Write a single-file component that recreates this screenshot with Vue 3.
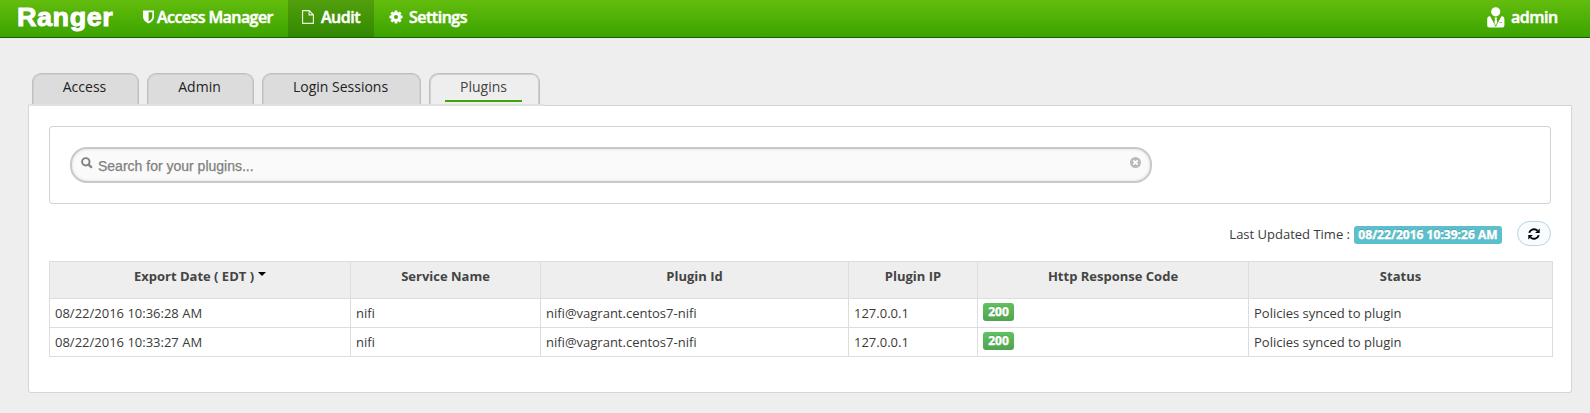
<script setup>
const tabs = [
  { label: 'Access', cls: 'w107' },
  { label: 'Admin', cls: 'w107' },
  { label: 'Login Sessions', cls: 'w160' },
  { label: 'Plugins', cls: 'active' },
]
const columns = ['Export Date ( EDT )', 'Service Name', 'Plugin Id', 'Plugin IP', 'Http Response Code', 'Status']
const rows = [
  { date: '08/22/2016 10:36:28 AM', service: 'nifi', id: 'nifi@vagrant.centos7-nifi', ip: '127.0.0.1', code: '200', status: 'Policies synced to plugin' },
  { date: '08/22/2016 10:33:27 AM', service: 'nifi', id: 'nifi@vagrant.centos7-nifi', ip: '127.0.0.1', code: '200', status: 'Policies synced to plugin' },
]
</script>

<template>
  <div class="page">
    <header class="topbar">
      <div class="logo">Ranger</div>
      <nav class="nav">
        <a class="nav-item access">
          <svg width="11" height="14" viewBox="0 0 11 14"><path d="M0 0.500h11v6.200c0 3.200-2.400 5.200-5.500 6.800C2.400 11.900 0 9.900 0 6.700z" fill="#fff" /><path d="M5.600 2.200h3.700v4.400c0 2.200-1.500 3.600-3.700 4.900z" fill="#46a800" /></svg>
          <span>Access Manager</span>
        </a>
        <a class="nav-item audit">
          <svg width="12" height="14" viewBox="0 0 12 14"><path d="M0.600 0.600h6.600l4.200 4.200v8.600H0.600zM7.100 0.600v4.300h4.300" fill="none" stroke="#fff" stroke-opacity="0.9" stroke-width="1.100" /></svg>
          <span>Audit</span>
        </a>
        <a class="nav-item settings">
          <svg width="14" height="14" viewBox="-7 -7 14 14">
            <g fill="#fff">
              <rect v-for="n in 4" :key="n" x="-1.400" y="-6.500" width="2.800" height="13" rx="0.400" :transform="`rotate(${n * 45})`" />
              <circle r="4.900" />
            </g>
            <circle r="2" fill="#48aa00" />
          </svg>
          <span>Settings</span>
        </a>
      </nav>
      <div class="user">
        <svg width="18" height="21" viewBox="0 0 18 21">
          <circle cx="8.700" cy="4.800" r="4.600" fill="#fff" />
          <path d="M3 9.100Q0.200 9.600 0.200 12.500v6q0 2 2 2h13.200q2 0 2-2v-6q0-2.900-2.800-3.400L8.800 19.500z" fill="#fff" />
          <path d="M7.400 10.600h2.800l-0.600 2 1.100 3.600-1.900 3.200-1.900-3.200 1.100-3.600z" fill="#fff" />
          <path d="M4.800 10l4 9.500 4-9.500M12.500 15.500h2.500" fill="none" stroke="#4bad04" stroke-width="0.700" />
        </svg>
        <span>admin</span>
      </div>
    </header>

    <main class="content">
      <div class="tabs">
        <div v-for="t in tabs" :key="t.label" class="tab" :class="t.cls"><span>{{ t.label }}</span></div>
      </div>
      <section class="panel">
        <div class="filter">
          <div class="search">
            <svg class="glass" width="12" height="12" viewBox="0 0 12 12"><circle cx="4.800" cy="4.800" r="3.700" fill="none" stroke="#808080" stroke-width="1.900" /><path d="M7.600 7.600l3.300 3.200" stroke="#808080" stroke-width="2.200" /></svg>
            <span class="placeholder">Search for your plugins...</span>
            <svg class="clear" width="11" height="11" viewBox="0 0 11 11"><circle cx="5.500" cy="5.500" r="5.500" fill="#b9b9b9" /><path d="M3.300 3.300l4.400 4.400M7.700 3.300l-4.400 4.400" stroke="#fff" stroke-width="1.700" /></svg>
          </div>
        </div>
        <div class="updated">
          <span class="updated-label">Last Updated Time :</span>
          <span class="stamp">08/22/2016 10:39:26 AM</span>
          <button class="refresh" aria-label="Refresh">
            <svg width="12" height="12" viewBox="0 0 12 12">
              <path d="M1.200 4.700A5 5 0 0 1 9.500 2.700M10.800 7.300A5 5 0 0 1 2.500 9.300" fill="none" stroke="#000" stroke-width="1.900" />
              <path d="M11.700 0.500v4.600H7.100zM0.300 11.500V6.900h4.600z" fill="#000" />
            </svg>
          </button>
        </div>
        <table class="grid">
          <colgroup><col class="c1" /><col class="c2" /><col class="c3" /><col class="c4" /><col class="c5" /><col class="c6" /></colgroup>
          <thead>
            <tr>
              <th v-for="(c, i) in columns" :key="c">{{ c }}<i v-if="i === 0" class="caret"></i></th>
            </tr>
          </thead>
          <tbody>
            <tr v-for="r in rows" :key="r.date">
              <td>{{ r.date }}</td>
              <td>{{ r.service }}</td>
              <td>{{ r.id }}</td>
              <td>{{ r.ip }}</td>
              <td><span class="code">{{ r.code }}</span></td>
              <td>{{ r.status }}</td>
            </tr>
          </tbody>
        </table>
      </section>
    </main>
  </div>
</template>

<style>
body { margin: 0; background: #eee; }
</style>

<style scoped>
* { box-sizing: border-box; }
.page { height: 413px; overflow: hidden; background: #eee; font-family: "Open Sans", "Noto Sans", sans-serif; font-size: 13px; color: #3a3a3a; }
.topbar { display: flex; height: 38px; background: linear-gradient(#63bd0d, #3ba300); border-bottom: 1px solid #176000; color: #fff; }
.logo { width: 112px; margin: 0 0 0 17px; font: bold 25px/35px "Liberation Sans", Arial, sans-serif; letter-spacing: 0.5px; -webkit-text-stroke: 0.9px #fff; text-shadow: 0 0 2px rgba(80, 100, 60, 0.7); transform: scaleX(1.08); transform-origin: 0 0; }
.nav { display: flex; height: 37px; }
.nav-item { display: flex; align-items: center; font-size: 16px; font-weight: 600; line-height: 34px; padding-bottom: 3px; white-space: nowrap; }
.nav-item span, .user span { -webkit-text-stroke: 0.5px #fff; letter-spacing: -0.5px; }
.access { width: 159px; padding-left: 14px; gap: 3px; }
.access span { letter-spacing: -0.57px; }
.audit { width: 86px; padding-left: 14px; gap: 7px; background: linear-gradient(#529f0d, #318800); }
.settings { padding-left: 15px; gap: 6px; }
.user { display: flex; align-items: center; gap: 6px; width: 103px; margin-left: auto; padding-bottom: 3px; font-size: 16px; font-weight: 600; }
.content { padding: 35px 18px 0 28px; }
.tabs { display: flex; gap: 8px; height: 31px; padding-left: 4px; }
.tab { height: 31px; border: 1px solid #bfbfbf; border-width: 1px 1px 0; box-shadow: inset 1px 1px #d0d0d0, inset -1px 0 #d0d0d0; border-radius: 9px 9px 0 0; background: #dcdcdc; text-align: center; font-size: 14px; line-height: 19px; padding: 3px 2px 0 0; color: #222; }
.w107 { width: 107px; }
.w160 { width: 159px; }
.active { width: 111px; background: #eee; color: #444; }
.active span { display: block; width: 77px; height: 25px; margin: 0 auto; border-bottom: 2px solid #3fa40b; }
.panel { position: relative; width: 1544px; height: 289px; border: 1px solid #d6d6d6; border-top: 0; border-radius: 3px; background: linear-gradient(#d4d4d4, #d4d4d4) 0 1px / 100% 1px no-repeat, #fff; padding: 22px 20px 0; }
.panel::before { content: ""; position: absolute; left: -1px; top: 0; width: 517px; height: 2px; background: #e1e1e1; }
.panel::after { content: ""; position: absolute; left: 516px; right: -1px; top: 0; height: 1px; background: #eee; }
.filter { width: 1502px; height: 78px; border: 1px solid #d3d3d3; border-radius: 3px; padding: 20px; }
.search { display: flex; width: 1082px; height: 36px; border: 2px solid #c9c9c9; border-radius: 17px; background: #fafafa; box-shadow: inset 0 0 3px #d6d6d6; padding: 0 9px; }
.glass { margin-top: 8px; }
.placeholder { margin-left: 5px; font: 14px/34px "Liberation Sans", Arial, sans-serif; color: #808080; -webkit-text-stroke: 0.25px #808080; }
.clear { margin: 8px 0 0 auto; }
.updated { display: flex; align-items: center; justify-content: flex-end; height: 57px; }
.updated-label { line-height: 18px; margin: 2px 4px 0 0; }
.stamp { width: 148px; height: 18px; margin: 4px 15px 0 0; border-radius: 3px; background: #5bc0cb; color: #fff; font-size: 12px; font-weight: 700; line-height: 17px; text-align: center; white-space: nowrap; text-shadow: 0 -1px rgba(0, 0, 0, 0.25); -webkit-text-stroke: 0.4px #fff; letter-spacing: 0.03px; }
.refresh { display: flex; align-items: center; justify-content: center; width: 34px; height: 25px; padding: 0; margin-top: 2px; border: 1px solid #bcd2dc; border-radius: 13px; background: #f7fcff; }
.grid { width: 1504px; table-layout: fixed; border-collapse: collapse; }
.c1 { width: 301px; } .c2 { width: 190px; } .c3 { width: 308px; } .c4 { width: 129px; } .c5 { width: 271px; } .c6 { width: 304px; }
th, td { border: 1px solid #ddd; }
th { height: 37px; padding: 5px 0 0; background: #eee; color: #444; font-weight: 700; line-height: 18px; vertical-align: top; text-align: center; }
td { height: 29px; padding: 0 5px; line-height: 18px; }
.caret { display: inline-block; margin-left: 4px; border: 4px solid transparent; border-top-color: #000; border-bottom: 0; vertical-align: 5px; }
.code { display: block; width: 31px; height: 18px; margin-top: -2px; border-radius: 3px; background: linear-gradient(#5fc25f, #51a351); color: #fff; font-size: 12px; font-weight: 700; line-height: 17px; text-align: center; text-shadow: 0 -1px rgba(0, 0, 0, 0.2); -webkit-text-stroke: 0.4px #fff; }
</style>
